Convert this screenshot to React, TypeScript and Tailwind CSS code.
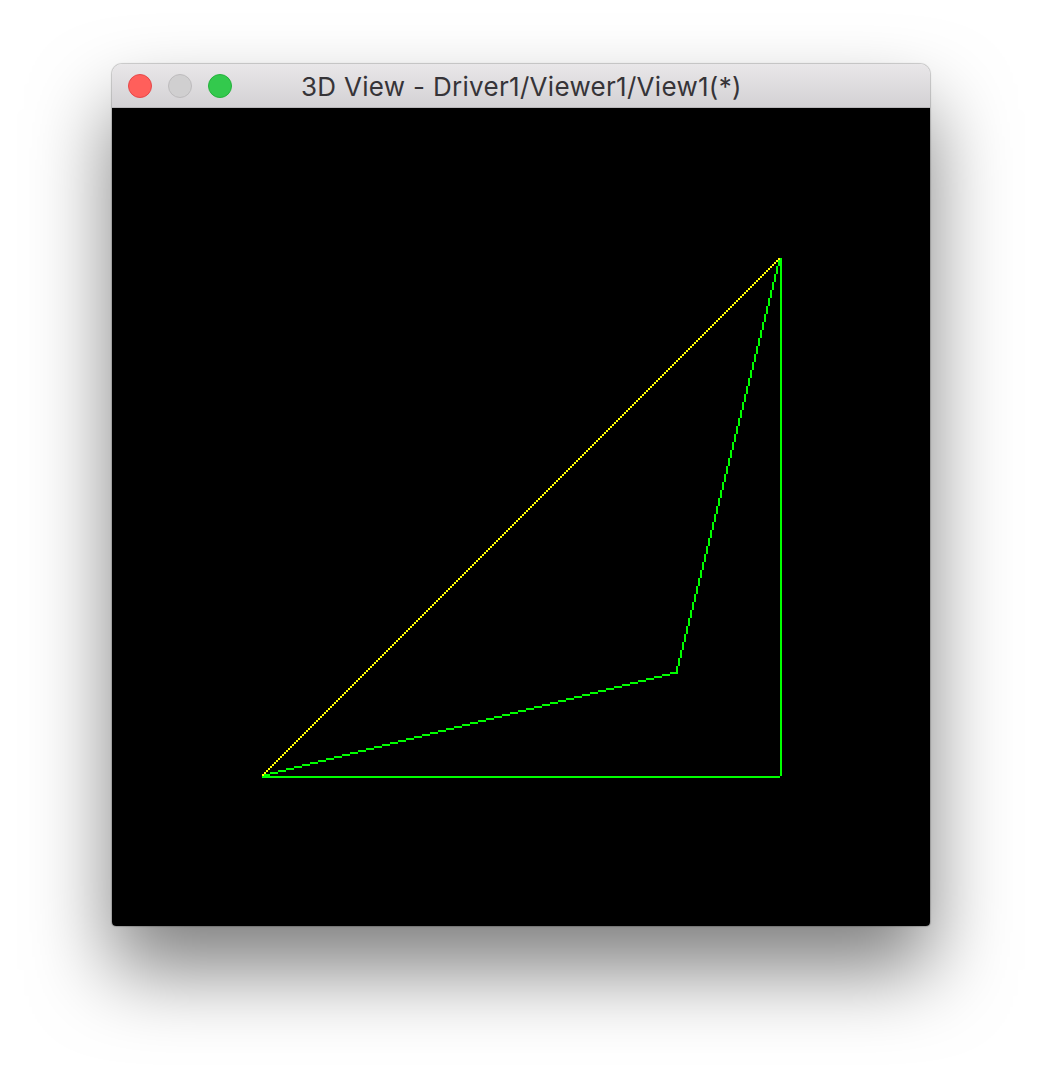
// the GL view is 409 px wide and shown at 2x, so lines are drawn on that grid
const greenPixels: [number, number][] = [];
const yellowPixels: [number, number][] = [];

for (let i = 75; i <= 333; i++) {
  greenPixels.push([i, 334]); // bottom edge
  greenPixels.push([334, i]); // right edge
  yellowPixels.push([i, 408 - i]); // long diagonal
}
for (let i = 0; i <= 207; i++) {
  const step = Math.floor(i / 4);
  greenPixels.push([75 + i, 333 - step]); // left point to inner corner
  greenPixels.push([282 + step, 282 - i]); // inner corner to top point
}

const toPath = (pixels: [number, number][]) =>
  pixels.map(([x, y]) => `M${x} ${y}h1v1h-1z`).join("");

export default function App() {
  return (
    <div className="flex h-[1086px] w-[1042px] justify-center overflow-hidden bg-white pt-[64px]">
      <div className="flex h-[862px] w-[818px] flex-col overflow-hidden rounded-t-[10px] rounded-b-[4px] shadow-[0_0_0_1px_rgb(0_0_0/0.1),0_0_2px_rgb(0_0_0/0.3),0_44px_80px_rgb(0_0_0/0.5)]">
        <div className="flex h-[44px] shrink-0 items-center border-b border-[#b9b7ba] bg-gradient-to-b from-[#e9e7e9] to-[#d3d1d4]">
          <div className="ml-4 flex gap-4">
            <span className="h-6 w-6 rounded-full border border-[#e5484a] bg-[#ff5f5b]" />
            <span className="h-6 w-6 rounded-full border border-[#bdbbbd] bg-[#d0cfd0]" />
            <span className="h-6 w-6 rounded-full border border-[#25b13c] bg-[#33c94d]" />
          </div>
          <span className="mt-[2px] ml-[69px] font-['Inter',sans-serif] text-[26px] leading-none tracking-[0.3px] whitespace-nowrap text-[#363438]">
            3D View - Driver1/Viewer1/View1(*)
          </span>
        </div>
        <div className="flex-1 bg-black">
          <svg width="818" height="818" viewBox="0 0 409 409" className="block" shapeRendering="crispEdges">
            <path d={toPath(greenPixels)} fill="#00ff00" />
            <path d={toPath(yellowPixels)} fill="#ffff00" />
          </svg>
        </div>
      </div>
    </div>
  );
}
